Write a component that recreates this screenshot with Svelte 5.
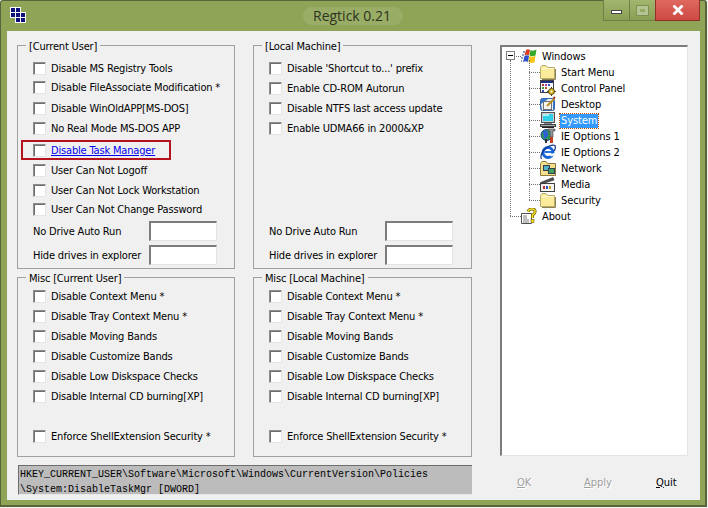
<script>
  // rows: label + gap is the offset from the regular 20px pitch
  const currentUser = [
    { label: 'Disable MS Registry Tools', gap: 0 },
    { label: 'Disable FileAssociate Modification *', gap: -1 },
    { label: 'Disable WinOldAPP[MS-DOS]', gap: 1 },
    { label: 'No Real Mode MS-DOS APP', gap: 0 },
    { label: 'Disable Task Manager', gap: 2, active: true },
    { label: 'User Can Not Logoff', gap: 0 },
    { label: 'User Can Not Lock Workstation', gap: 0 },
    { label: 'User Can Not Change Password', gap: -1 }
  ];
  const localMachine = [
    { label: "Disable 'Shortcut to...' prefix", gap: 0 },
    { label: 'Enable CD-ROM Autorun', gap: 0 },
    { label: 'Disable NTFS last access update', gap: 0 },
    { label: 'Enable UDMA66 in 2000&XP', gap: 0 }
  ];
  const misc = [
    { label: 'Disable Context Menu *', gap: 0 },
    { label: 'Disable Tray Context Menu *', gap: 0 },
    { label: 'Disable Moving Bands', gap: 0 },
    { label: 'Disable Customize Bands', gap: 0 },
    { label: 'Disable Low Diskspace Checks', gap: 0 },
    { label: 'Disable Internal CD burning[XP]', gap: 0 },
    { label: 'Enforce ShellExtension Security *', gap: 20 }
  ];
  const treeItems = [
    { label: 'Start Menu', icon: 'folder' },
    { label: 'Control Panel', icon: 'control' },
    { label: 'Desktop', icon: 'desktop' },
    { label: 'System', icon: 'system', selected: true },
    { label: 'IE Options 1', icon: 'ietools' },
    { label: 'IE Options 2', icon: 'ie' },
    { label: 'Network', icon: 'network' },
    { label: 'Media', icon: 'media' },
    { label: 'Security', icon: 'folder' }
  ];
</script>

{#snippet icon(name)}
  <svg class="icon" width="16" height="16" viewBox="0 0 16 16">
    {#if name === 'windows'}
      <path d="M5 2 Q7 0.5 9 2 L8 7.5 Q6 6 3.5 7.5Z" fill="#dc3c1e"/>
      <path d="M9.5 2 Q12 3.5 15.5 1.5 L14.5 7.5 Q11 8.5 8.5 7.5Z" fill="#35a82a"/>
      <path d="M3.5 8 Q6 6.5 8 8 L7 14 Q4.5 12.5 2 14Z" fill="#2a4fc8"/>
      <path d="M8.5 8 Q11 9 14.5 8 L13.5 14.5 Q10 15.5 7.5 14Z" fill="#f4c416"/>
      <path d="M2 4h2M1 7h2M0 10h2M0 13h1" stroke="#27357a"/>
    {:else if name === 'folder'}
      <path d="M0.5 3.5 L2 1.5 H6 L7.5 3.5 H14.5 V14.5 H0.5Z" fill="#fdeb9c" stroke="#b8aa6a"/>
      <path d="M1.5 4.5 H13.5" stroke="#fff8d0"/>
      <path d="M15.5 5 V15.5 H2" stroke="#8a8050" fill="none"/>
    {:else if name === 'control'}
      <rect x="0.5" y="0.5" width="13" height="12" fill="#fff" stroke="#404040"/>
      <rect x="1" y="1" width="12" height="2" fill="#1c2f80"/>
      <path d="M2 4h2v2H2z" fill="#c03030"/>
      <path d="M5 4h2v2H5z" fill="#a040b0"/>
      <path d="M8 4h2v2H8z" fill="#3050c0"/>
      <path d="M2 7h2v2H2z" fill="#30a040"/>
      <path d="M5 7h2v2H5z" fill="#c05030"/>
      <path d="M2 10h2v2H2z" fill="#3050c0"/>
      <circle cx="11.5" cy="11.5" r="3" fill="#d8b820" stroke="#5a4a10"/>
      <circle cx="11.5" cy="11.5" r="1" fill="#fff"/>
      <path d="M11.5 7v2M11.5 14v2M7 11.5h2M14 11.5h2" stroke="#5a4a10"/>
    {:else if name === 'desktop'}
      <rect x="0.5" y="2.5" width="14" height="12" rx="2" fill="#2f78d8" stroke="#3a68a8"/>
      <path d="M1 8 L8 3 H13 V14 H2Z" fill="#ececec"/>
      <rect x="3.5" y="5.5" width="8" height="8" fill="#f6f6f6" stroke="#707070"/>
      <path d="M7 10 L14 3" stroke="#b89020" stroke-width="2"/>
      <path d="M13.5 2.5 L15 1" stroke="#b03020" stroke-width="2"/>
    {:else if name === 'system'}
      <rect x="1.5" y="0.5" width="13" height="10" fill="#c8ccd0" stroke="#505050"/>
      <rect x="3" y="2" width="10" height="7" fill="#30cfe8"/>
      <path d="M3 2h6v2H3z" fill="#a8f0f8"/>
      <path d="M4 11h8v1H4z" fill="#808488"/>
      <rect x="0.5" y="12.5" width="15" height="2" fill="#a8acb0" stroke="#404040"/>
      <path d="M2 15.5h12" stroke="#202020"/>
    {:else if name === 'ietools'}
      <circle cx="6.5" cy="7" r="5.5" fill="#2c9a50" stroke="#1c3f90"/>
      <path d="M3 3 Q7 1 8 5 T4 11Z" fill="#2f5fd8"/>
      <path d="M8 1h7v2h-2v6h-3V3H8z" fill="#909498" stroke="#404040" stroke-width="0.6"/>
      <path d="M10 9h3v6h-3z" fill="#c04020"/>
      <path d="M5 11h2v4H5z" fill="#303030"/>
    {:else if name === 'ie'}
      <circle cx="8" cy="8.5" r="5" fill="none" stroke="#1464d8" stroke-width="2.8"/>
      <path d="M4.5 8 H12.5" stroke="#1464d8" stroke-width="1.8"/>
      <path d="M10.5 11.5 L14.5 10" stroke="#fff" stroke-width="2"/>
      <path d="M1.5 15 Q-0.5 11 5 5 Q11 0 15 1.5 Q16 5 14 7" fill="none" stroke="#18368c" stroke-width="1.2"/>
    {:else if name === 'network'}
      <path d="M0.5 3.5 L2 1.5 H6 L7.5 3.5 H15.5 V15.5 H0.5Z" fill="#f6df8c" stroke="#8a7a40"/>
      <rect x="3.5" y="5.5" width="6" height="5" fill="#50b0c8" stroke="#304050"/>
      <rect x="8.5" y="8.5" width="6" height="5" fill="#40a060" stroke="#304050"/>
    {:else if name === 'media'}
      <rect x="0.5" y="7.5" width="14" height="8" fill="#f4f4f4" stroke="#404040"/>
      <path d="M0.5 6.5 L13 1.5 L14 4 L1.5 8Z" fill="#505050" stroke="#303030" stroke-width="0.6"/>
      <path d="M3 10h2v3H3z" fill="#c03030"/>
      <path d="M6 10h2v3H6z" fill="#3050c0"/>
      <path d="M9 10h2v3H9z" fill="#c0a020"/>
    {:else if name === 'about'}
      <path d="M0.5 5.5 H10.5 V15.5 H0.5Z" fill="#fff" stroke="#505050"/>
      <path d="M2 8h4M2 10h4M2 12h6M2 14h6" stroke="#808080"/>
      <path d="M7 3.5 Q8 1 11 1 Q14.5 1 14 4 Q13.5 6 11.5 7 V10" fill="none" stroke="#6a5a00" stroke-width="3"/>
      <path d="M7 3.5 Q8 1 11 1 Q14.5 1 14 4 Q13.5 6 11.5 7 V10" fill="none" stroke="#f8e020" stroke-width="1.6"/>
      <rect x="10" y="11.5" width="3" height="3" fill="#f8e020" stroke="#6a5a00" stroke-width="0.6"/>
    {/if}
  </svg>
{/snippet}

{#snippet checkRows(rows)}
  {#each rows as row}
    <label class="check" class:active={row.active} style="margin-top: {row.gap}px">
      <span class="box"></span>
      <span class="text" class:link={row.active}>{row.label}</span>
    </label>
  {/each}
{/snippet}

{#snippet driveFields()}
  <div class="fields">
    <div class="field first"><span>No Drive Auto Run</span><span class="input"></span></div>
    <div class="field"><span>Hide drives in explorer</span><span class="input"></span></div>
  </div>
{/snippet}

<div class="window">
  <header class="titlebar">
    <svg class="appicon" width="17" height="17" viewBox="0 0 17 17">
      <path d="M0 0h11v5h5v11H5v-5H0z" fill="#fff"/>
      <path d="M1 1h4v4H1zM6 1h4v4H6zM1 6h4v4H1zM6 6h4v4H6zM11 6h4v4h-4zM6 11h4v4H6zM11 11h4v4h-4z" fill="#10107a"/>
    </svg>
    <h1>Regtick 0.21</h1>
    <div class="controls">
      <span class="ctl min"><i></i></span>
      <span class="ctl max"><i></i></span>
      <span class="ctl close">
        <svg width="12" height="10" viewBox="0 0 12 10">
          <path d="M1.5 0.5 L10.5 9.5 M10.5 0.5 L1.5 9.5" stroke="#fff" stroke-width="2.8"/>
        </svg>
      </span>
    </div>
  </header>

  <div class="client">
    <div class="left">
      <div class="groups">
        <section class="group">
          <span class="legend">[Current User]</span>
          {@render checkRows(currentUser)}
          {@render driveFields()}
        </section>
        <section class="group right">
          <span class="legend">[Local Machine]</span>
          {@render checkRows(localMachine)}
          <div class="spacer"></div>
          {@render driveFields()}
        </section>
        <section class="group misc">
          <span class="legend">Misc [Current User]</span>
          {@render checkRows(misc)}
        </section>
        <section class="group misc right">
          <span class="legend">Misc [Local Machine]</span>
          {@render checkRows(misc)}
        </section>
      </div>
      <div class="status">HKEY_CURRENT_USER\Software\Microsoft\Windows\CurrentVersion\Policies<br>\System:DisableTaskMgr [DWORD]</div>
    </div>

    <div class="side">
      <div class="tree">
        <div class="node root">
          <span class="toggle"></span>
          {@render icon('windows')}
          <span class="name">Windows</span>
        </div>
        <div class="children">
          {#each treeItems as item}
            <div class="node child">
              {@render icon(item.icon)}
              <span class="name" class:selected={item.selected}>{item.label}</span>
            </div>
          {/each}
        </div>
        <div class="node root last">
          {@render icon('about')}
          <span class="name">About</span>
        </div>
      </div>
      <div class="buttons">
        <span class="btn ok disabled"><u>O</u>K</span>
        <span class="btn apply disabled"><u>A</u>pply</span>
        <span class="btn quit"><u>Q</u>uit</span>
      </div>
    </div>
  </div>
</div>

<style>
  :global(body) {
    background: #f4f5f0;
    font-family: "DejaVu Sans Condensed", "Liberation Sans", Arial, sans-serif;
  }

  .window {
    width: 707px;
    height: 507px;
    box-sizing: border-box;
    border: 1px solid #56653a;
    border-right-width: 2px;
    border-bottom-width: 2px;
    border-radius: 3px 3px 0 0;
    background: #8fa456;
    padding: 0 5px 5px 6px;
    display: flex;
    flex-direction: column;
    position: relative;
  }

  .titlebar {
    height: 30px;
    display: flex;
    align-items: center;
    position: relative;
    flex: none;
  }

  .appicon {
    margin: 6px 0 0 3px;
    align-self: flex-start;
  }

  h1 {
    position: absolute;
    left: 296px;
    top: 6px;
    margin: 0;
    padding: 0 12px 0 10px;
    border-radius: 10px;
    background: rgba(255, 255, 255, 0.1);
    font: 400 14px/18px "Open Sans", sans-serif;
    color: #2c3320;
  }

  .controls {
    position: absolute;
    top: -1px;
    right: 0;
    display: flex;
    height: 20px;
  }

  .ctl {
    display: flex;
    align-items: center;
    justify-content: center;
    box-sizing: border-box;
    height: 21px;
    border: 1px solid #6e7f48;
    border-top: 0;
  }

  .min, .max {
    width: 26px;
    background: linear-gradient(#a3b56e, #8a9f54);
    border-right: 0;
  }

  .min i {
    display: block;
    width: 11px;
    height: 4px;
    margin-top: 4px;
    background: #fff;
    border: 1px solid #444;
    box-sizing: border-box;
  }

  .max i {
    display: block;
    width: 11px;
    height: 9px;
    border: 3px solid #b6c493;
    outline: 1px solid #7f9150;
    box-sizing: border-box;
  }

  .close {
    width: 45px;
    background: linear-gradient(#e0685f, #cc4a44);
    border-color: #8e2f28;
  }

  .client {
    flex: 1;
    background: #f0f0f0;
    display: flex;
    padding: 14px 0 0 10px;
  }

  .left {
    width: 455px;
  }

  .groups {
    display: grid;
    grid-template-columns: 218px 219px;
    grid-template-rows: 224px 180px;
    column-gap: 18px;
    row-gap: 8px;
  }

  .group {
    position: relative;
    box-sizing: border-box;
    border: 1px solid #a0a0a0;
    padding: 12px 0 0 15px;
    display: flex;
    flex-direction: column;
    font-size: 11px;
    letter-spacing: -0.17px;
    color: #000;
  }

  .group.misc {
    padding-top: 8px;
  }

  .legend {
    position: absolute;
    top: -6px;
    left: 8px;
    padding: 0 3px;
    background: #f0f0f0;
    line-height: 14px;
  }

  .check {
    display: flex;
    align-items: center;
    height: 20px;
    flex: none;
    position: relative;
  }

  .box {
    width: 13px;
    height: 13px;
    flex: none;
    box-sizing: border-box;
    background: #fff;
    border: 1px solid #8e8e8e;
    border-right-color: #e4e4e4;
    border-bottom-color: #e4e4e4;
    box-shadow: inset 1px 1px 0 #6e6e6e;
    margin-right: 5px;
  }

  .link {
    color: #0000f0;
    text-decoration: underline;
  }

  .active::after {
    content: '';
    position: absolute;
    left: -12px;
    top: 0;
    width: 150px;
    height: 20px;
    box-sizing: border-box;
    border: 2px solid #b4121c;
  }

  .spacer {
    flex: 1;
  }

  .fields {
    display: flex;
    flex-direction: column;
  }

  .group:not(.right) .fields {
    margin-top: -2px;
  }

  .right .fields {
    margin-bottom: 3px;
  }

  .field {
    display: flex;
    align-items: center;
    justify-content: space-between;
    width: 184px;
    height: 20px;
    margin-top: 4px;
  }

  .input {
    width: 68px;
    height: 20px;
    box-sizing: border-box;
    background: #fff;
    border: 1px solid #e4e4e4;
    border-top: 2px solid #7c7c7c;
    border-left: 2px solid #7c7c7c;
  }

  .status {
    margin: 8px 0 0 1px;
    width: 454px;
    height: 30px;
    box-sizing: border-box;
    background: #bcbcbc;
    border-top: 1px solid #6e6e6e;
    border-left: 1px solid #6e6e6e;
    border-bottom: 1px solid #e8e8e8;
    padding: 1px 0 0 1px;
    font: 10px/15px "Liberation Mono", monospace;
    color: #000;
    white-space: nowrap;
  }

  .side {
    margin-left: 28px;
    width: 188px;
  }

  .tree {
    height: 411px;
    box-sizing: border-box;
    background: #fff;
    border: 1px solid #e4e4e4;
    border-top: 2px solid #7c7c7c;
    border-left: 2px solid #7c7c7c;
    padding: 1px 0 0 4px;
    font-size: 11px;
    letter-spacing: -0.1px;
    position: relative;
  }

  /* root guide line */
  .tree::before {
    content: '';
    position: absolute;
    left: 8px;
    top: 13px;
    height: 156px;
    border-left: 1px dotted #707070;
  }

  .node {
    height: 16px;
    display: flex;
    align-items: center;
    position: relative;
  }

  .root {
    padding-left: 15px;
  }

  .root::before, .child::before {
    content: '';
    position: absolute;
    top: 8px;
    border-top: 1px dotted #707070;
  }

  .root::before {
    left: 4px;
    width: 11px;
  }

  .toggle {
    position: absolute;
    left: 0;
    top: 3px;
    width: 9px;
    height: 9px;
    box-sizing: border-box;
    border: 1px solid #808080;
    background: linear-gradient(#000, #000) center / 5px 1px no-repeat #fff;
    z-index: 1;
  }

  .icon {
    flex: none;
    position: relative;
  }

  .name {
    margin: 1px 0 0 4px;
    padding: 0 1px;
    line-height: 14px;
  }

  .children {
    position: relative;
  }

  .children::before {
    content: '';
    position: absolute;
    left: 23px;
    top: -4px;
    height: 140px;
    border-left: 1px dotted #707070;
  }

  .child {
    padding-left: 34px;
  }

  .child::before {
    left: 23px;
    width: 11px;
  }

  .selected {
    background: #3399ff;
    color: #fff;
    outline: 1px dotted #c05000;
  }

  .buttons {
    display: flex;
    font-size: 11px;
    height: 30px;
    align-items: center;
    position: relative;
    margin-top: 11px;
  }

  .btn {
    position: absolute;
  }

  .ok { left: 17px; }
  .apply { left: 84px; }
  .quit { left: 156px; }

  .disabled {
    color: #a0a0a0;
    text-shadow: 1px 1px 0 #fff;
  }
</style>
